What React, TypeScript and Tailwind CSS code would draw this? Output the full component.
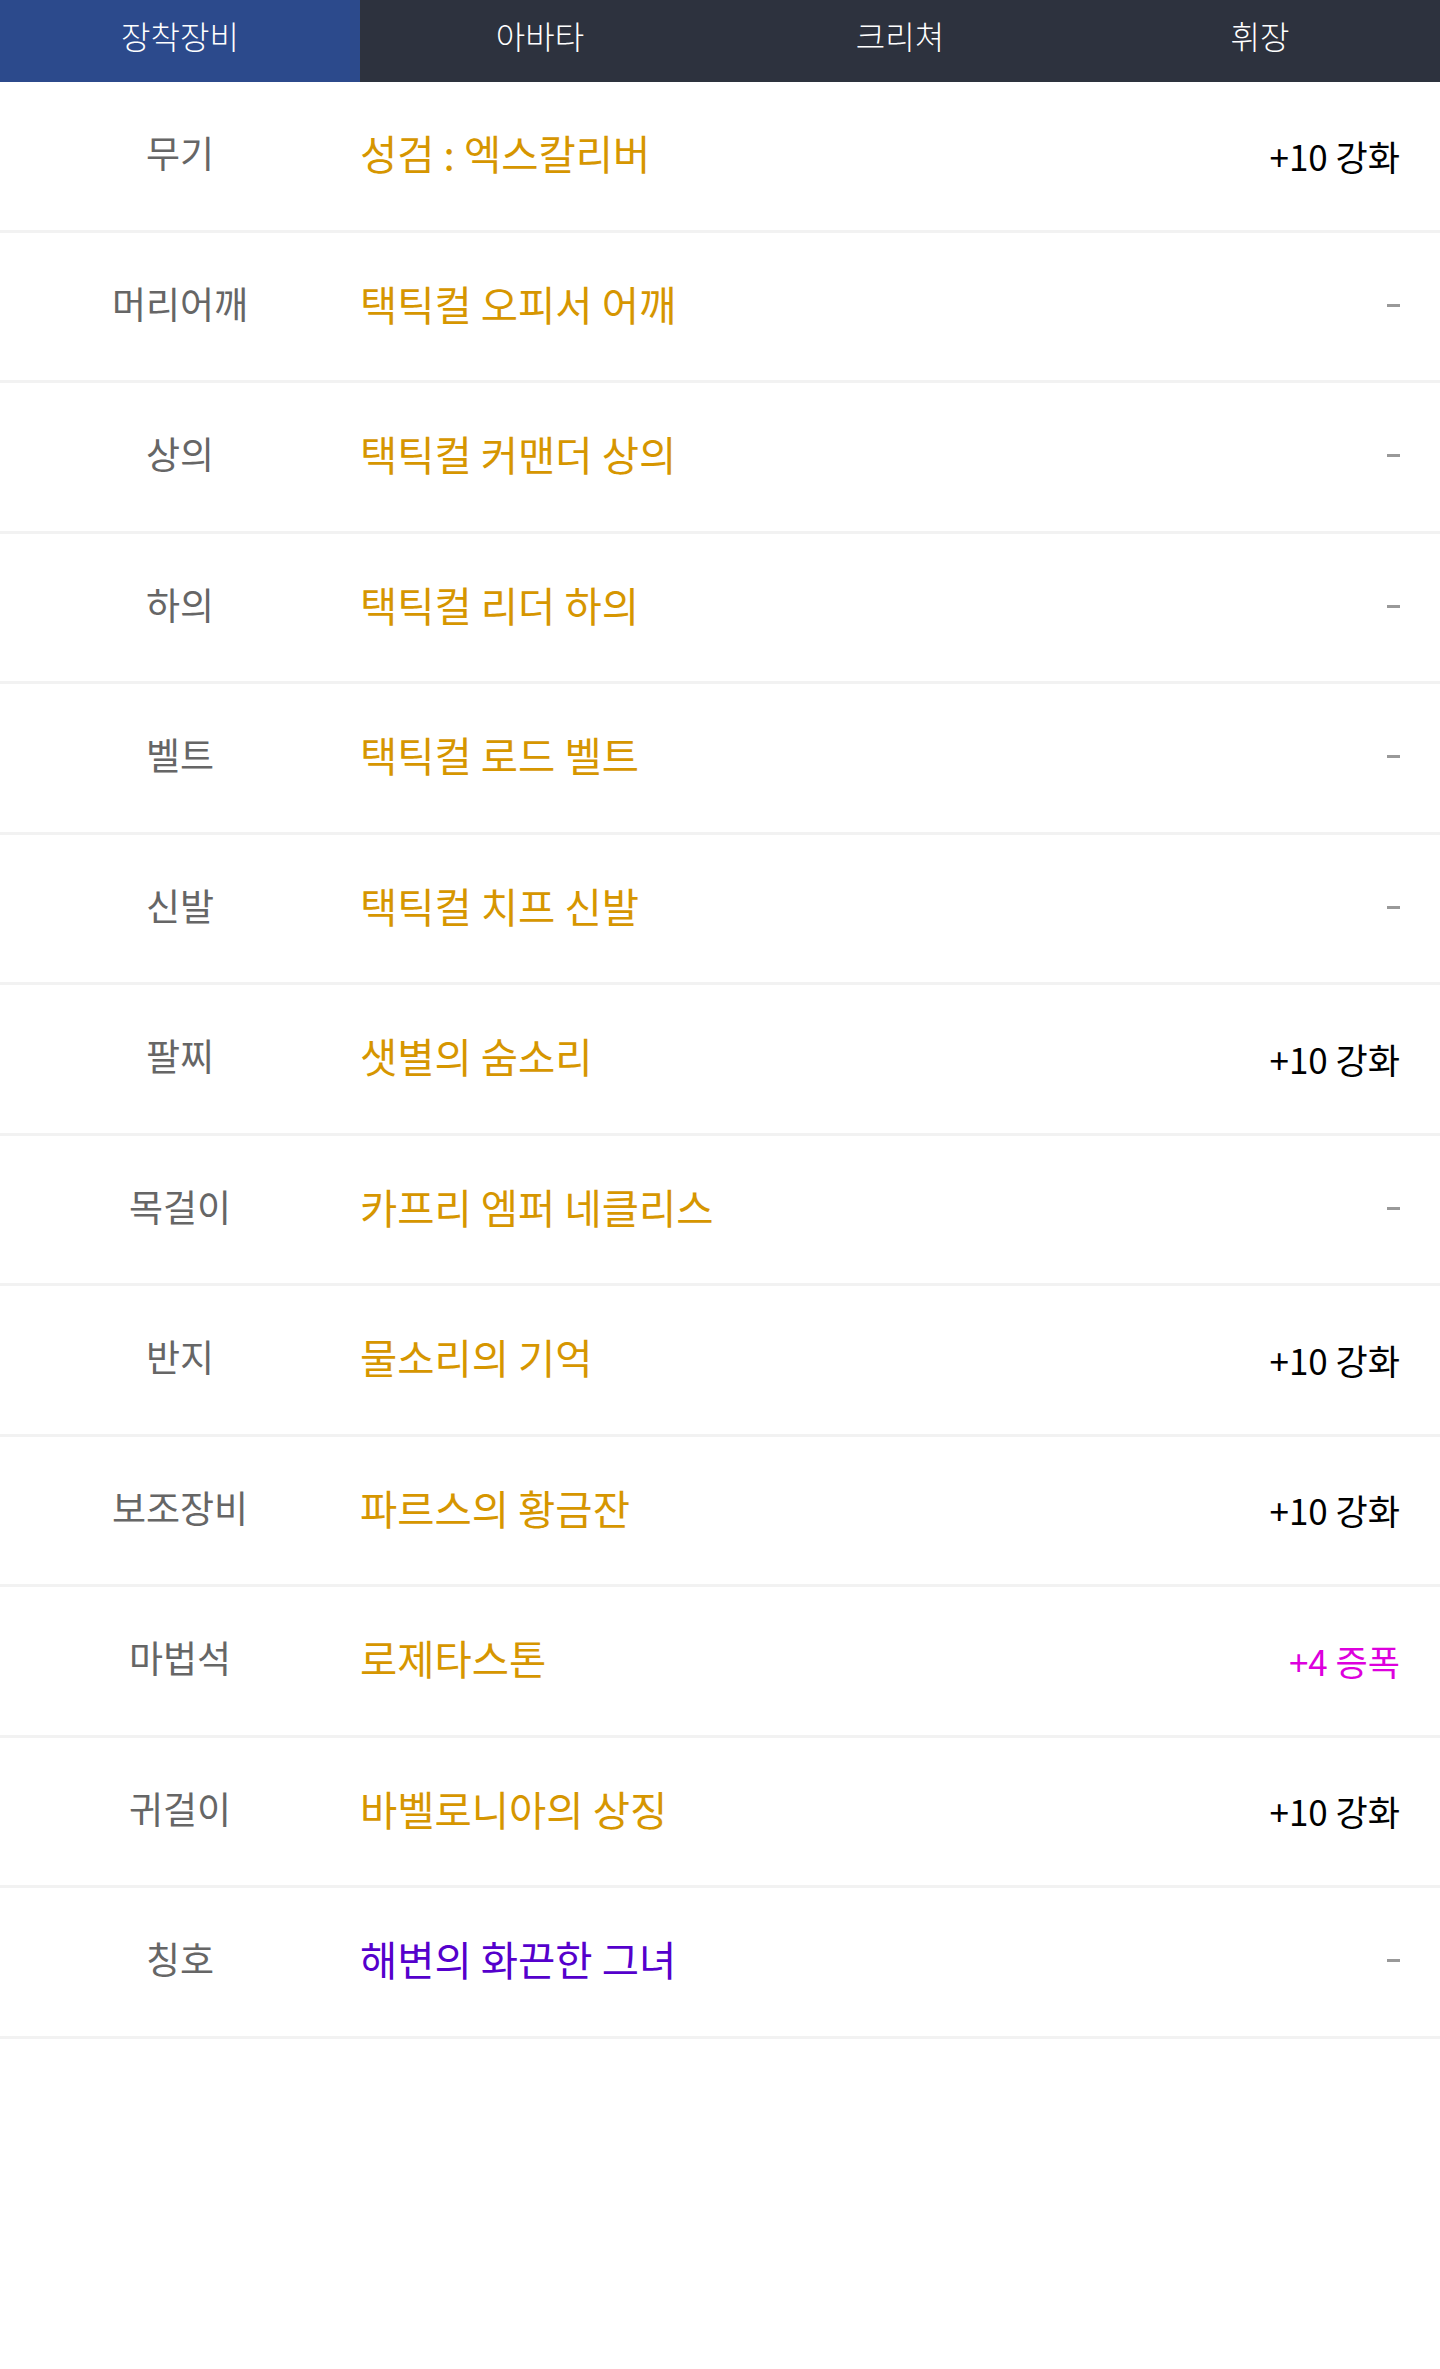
const tabs = ["장착장비", "아바타", "크리쳐", "휘장"];

type Item = {
  slot: string;
  name: string;
  nameColor?: string;
  extra?: string;
  extraColor?: string;
};

const items: Item[] = [
  { slot: "무기", name: "성검 : 엑스칼리버", extra: "+10 강화" },
  { slot: "머리어깨", name: "택틱컬 오피서 어깨" },
  { slot: "상의", name: "택틱컬 커맨더 상의" },
  { slot: "하의", name: "택틱컬 리더 하의" },
  { slot: "벨트", name: "택틱컬 로드 벨트" },
  { slot: "신발", name: "택틱컬 치프 신발" },
  { slot: "팔찌", name: "샛별의 숨소리", extra: "+10 강화" },
  { slot: "목걸이", name: "카프리 엠퍼 네클리스" },
  { slot: "반지", name: "물소리의 기억", extra: "+10 강화" },
  { slot: "보조장비", name: "파르스의 황금잔", extra: "+10 강화" },
  { slot: "마법석", name: "로제타스톤", extra: "+4 증폭", extraColor: "text-[#dd00dd]" },
  { slot: "귀걸이", name: "바벨로니아의 상징", extra: "+10 강화" },
  { slot: "칭호", name: "해변의 화끈한 그녀", nameColor: "text-[#5500cc]" },
];

export default function App() {
  return (
    <div className="min-h-screen w-full bg-white font-['Noto_Sans_CJK_KR','Noto_Sans',sans-serif]">
      <nav className="flex h-[82px] bg-[#2d323e]">
        {tabs.map((t, i) => (
          <div
            key={t}
            className={`flex flex-1 items-center justify-center pb-[12px] text-[32px] font-light text-white ${
              i === 0 ? "bg-[#2c4a8c]" : ""
            }`}
          >
            {t}
          </div>
        ))}
      </nav>

      <ul>
        {items.map((it) => (
          <li
            key={it.slot}
            className="flex h-[150.5px] items-center border-b-[3px] border-[#f2f2f2] pr-[40px]"
          >
            <span className="w-[360px] shrink-0 pb-[6px] text-center text-[37px] text-[#666666]">
              {it.slot}
            </span>
            <span className={`flex-1 pb-[4px] text-[40.5px] ${it.nameColor ?? "text-[#d69600]"}`}>
              {it.name}
            </span>
            {it.extra ? (
              <span className={`text-[35px] ${it.extraColor ?? "text-black"}`}>{it.extra}</span>
            ) : (
              <span className="mb-[2px] h-[3px] w-[13px] bg-[#999999]" />
            )}
          </li>
        ))}
      </ul>
    </div>
  );
}
